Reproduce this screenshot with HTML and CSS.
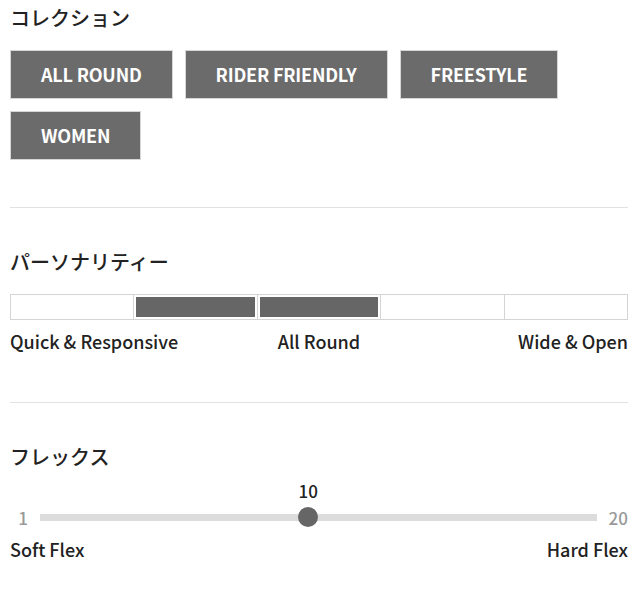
FILE: index.html
```html
<!DOCTYPE html>
<html lang="ja">
<head>
    <meta charset="UTF-8">
    <meta name="viewport" content="width=device-width, initial-scale=1.0">
    <title>ボード詳細</title>
    <link rel="stylesheet" href="styles.css">
</head>
<body>
    <div class="spec">
        <section class="spec-block">
            <h2 class="spec-title">コレクション</h2>
            <div class="tags">
                <span class="tag">ALL ROUND</span>
                <span class="tag">RIDER FRIENDLY</span>
                <span class="tag">FREESTYLE</span>
                <span class="tag">WOMEN</span>
            </div>
        </section>

        <section class="spec-block">
            <h2 class="spec-title">パーソナリティー</h2>
            <div class="scale">
                <div class="scale-cell"></div>
                <div class="scale-cell is-on"></div>
                <div class="scale-cell is-on"></div>
                <div class="scale-cell"></div>
                <div class="scale-cell"></div>
            </div>
            <div class="scale-labels three">
                <span>Quick &amp; Responsive</span>
                <span>All Round</span>
                <span>Wide &amp; Open</span>
            </div>
        </section>

        <section class="spec-block">
            <h2 class="spec-title">フレックス</h2>
            <div class="flex-row">
                <span class="flex-min">1</span>
                <div class="flex-track">
                    <div class="flex-thumb" style="left: 48.2%">
                        <span class="flex-value">10</span>
                    </div>
                </div>
                <span class="flex-max">20</span>
            </div>
            <div class="scale-labels">
                <span>Soft Flex</span>
                <span>Hard Flex</span>
            </div>
        </section>
    </div>
</body>
</html>
```

FILE: styles.css
```css
body {
    margin: 0;
    padding: 0 12px 0 10px;
    background: #fff;
    color: #222;
    font-family: "Noto Sans CJK JP", "Noto Sans", sans-serif;
}

.spec-block {
    padding: 3px 0 47px;
    border-bottom: 1px solid #e2e2e2;
    margin-bottom: 36px;
}

.spec-block:last-child {
    border-bottom: none;
    padding-bottom: 20px;
    margin-bottom: 0;
}

.spec-title {
    margin: 0 0 17px;
    font-size: 20px;
    font-weight: 500;
    line-height: 30px;
}

/* コレクションのタグ */
.tags {
    display: flex;
    flex-wrap: wrap;
    gap: 12px;
}

.tag {
    display: inline-block;
    padding: 0 30px;
    height: 47px;
    line-height: 47px;
    background: #6b6b6b;
    border: 1px solid #d6d6d6;
    color: #fff;
    font-size: 18px;
    font-weight: 700;
    letter-spacing: -0.2px;
}

/* パーソナリティーのスケール */
.scale {
    display: flex;
    height: 24px;
    border: 1px solid #d4d4d4;
}

.scale-cell {
    flex: 1;
    border-right: 1px solid #d4d4d4;
    padding: 2px;
}

.scale-cell:last-child {
    border-right: none;
}

.scale-cell.is-on::before {
    content: "";
    display: block;
    height: 100%;
    background: #666;
}

.scale-labels {
    display: flex;
    justify-content: space-between;
    margin-top: 7px;
    font-size: 18px;
    font-weight: 500;
    line-height: 28px;
}

.scale-labels.three {
    display: grid;
    grid-template-columns: 1fr auto 1fr;
}

.scale-labels.three span:last-child {
    text-align: right;
}

/* フレックスのスライダー */
.flex-row {
    display: flex;
    align-items: center;
    gap: 12px;
    margin-top: 33px;
    height: 24px;
}

.flex-min,
.flex-max {
    color: #999;
    font-size: 17px;
    font-weight: 500;
}

.flex-min {
    width: 18px;
    text-align: right;
}

.flex-track {
    position: relative;
    flex: 1;
    height: 7px;
    background: #dcdcdc;
}

.flex-thumb {
    position: absolute;
    top: 50%;
    width: 20px;
    height: 20px;
    margin: -10px 0 0 -10px;
    border-radius: 50%;
    background: #666;
}

.flex-value {
    position: absolute;
    bottom: 24px;
    left: 50%;
    transform: translateX(-50%);
    color: #222;
    font-size: 17px;
    font-weight: 500;
}

.flex-row + .scale-labels {
    margin-top: 6px;
}
```
